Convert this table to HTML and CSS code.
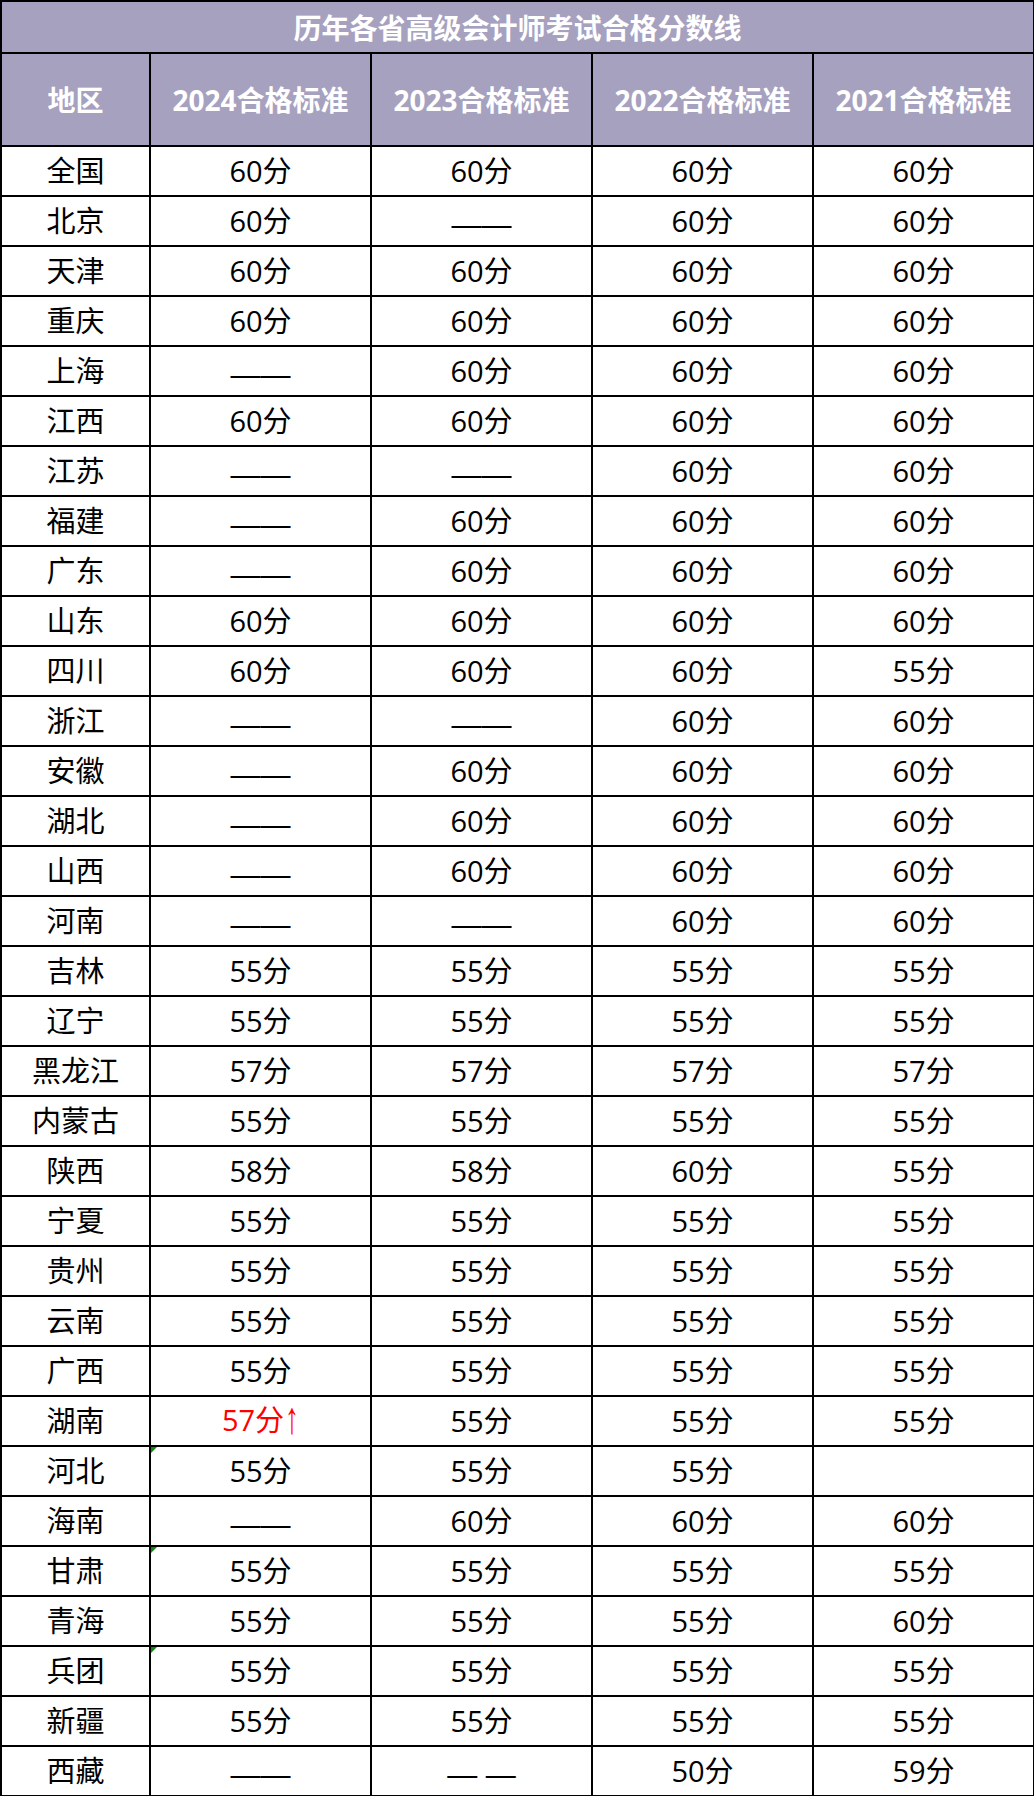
FILE: index.html
```html
<!DOCTYPE html>
<html lang="zh-CN">
<head>
<meta charset="utf-8">
<title>历年各省高级会计师考试合格分数线</title>
<link rel="stylesheet" href="styles.css">
</head>
<body>
<table class="sheet">
  <colgroup>
    <col class="c-region">
    <col class="c-year">
    <col class="c-year">
    <col class="c-year">
    <col class="c-year">
  </colgroup>
  <thead>
    <tr class="title-row"><th colspan="5">历年各省高级会计师考试合格分数线</th></tr>
    <tr class="head-row"><th>地区</th><th>2024合格标准</th><th>2023合格标准</th><th>2022合格标准</th><th>2021合格标准</th></tr>
  </thead>
  <tbody>
    <tr><td>全国</td><td>60分</td><td>60分</td><td>60分</td><td>60分</td></tr>
    <tr><td>北京</td><td>60分</td><td><span class="dash">——</span></td><td>60分</td><td>60分</td></tr>
    <tr><td>天津</td><td>60分</td><td>60分</td><td>60分</td><td>60分</td></tr>
    <tr><td>重庆</td><td>60分</td><td>60分</td><td>60分</td><td>60分</td></tr>
    <tr><td>上海</td><td><span class="dash">——</span></td><td>60分</td><td>60分</td><td>60分</td></tr>
    <tr><td>江西</td><td>60分</td><td>60分</td><td>60分</td><td>60分</td></tr>
    <tr><td>江苏</td><td><span class="dash">——</span></td><td><span class="dash">——</span></td><td>60分</td><td>60分</td></tr>
    <tr><td>福建</td><td><span class="dash">——</span></td><td>60分</td><td>60分</td><td>60分</td></tr>
    <tr><td>广东</td><td><span class="dash">——</span></td><td>60分</td><td>60分</td><td>60分</td></tr>
    <tr><td>山东</td><td>60分</td><td>60分</td><td>60分</td><td>60分</td></tr>
    <tr><td>四川</td><td>60分</td><td>60分</td><td>60分</td><td>55分</td></tr>
    <tr><td>浙江</td><td><span class="dash">——</span></td><td><span class="dash">——</span></td><td>60分</td><td>60分</td></tr>
    <tr><td>安徽</td><td><span class="dash">——</span></td><td>60分</td><td>60分</td><td>60分</td></tr>
    <tr><td>湖北</td><td><span class="dash">——</span></td><td>60分</td><td>60分</td><td>60分</td></tr>
    <tr><td>山西</td><td><span class="dash">——</span></td><td>60分</td><td>60分</td><td>60分</td></tr>
    <tr><td>河南</td><td><span class="dash">——</span></td><td><span class="dash">——</span></td><td>60分</td><td>60分</td></tr>
    <tr><td>吉林</td><td>55分</td><td>55分</td><td>55分</td><td>55分</td></tr>
    <tr><td>辽宁</td><td>55分</td><td>55分</td><td>55分</td><td>55分</td></tr>
    <tr><td>黑龙江</td><td>57分</td><td>57分</td><td>57分</td><td>57分</td></tr>
    <tr><td>内蒙古</td><td>55分</td><td>55分</td><td>55分</td><td>55分</td></tr>
    <tr><td>陕西</td><td>58分</td><td>58分</td><td>60分</td><td>55分</td></tr>
    <tr><td>宁夏</td><td>55分</td><td>55分</td><td>55分</td><td>55分</td></tr>
    <tr><td>贵州</td><td>55分</td><td>55分</td><td>55分</td><td>55分</td></tr>
    <tr><td>云南</td><td>55分</td><td>55分</td><td>55分</td><td>55分</td></tr>
    <tr><td>广西</td><td>55分</td><td>55分</td><td>55分</td><td>55分</td></tr>
    <tr><td>湖南</td><td class="up">57分<span class="arrow">↑</span></td><td>55分</td><td>55分</td><td>55分</td></tr>
    <tr><td>河北</td><td class="note">55分</td><td>55分</td><td>55分</td><td></td></tr>
    <tr><td>海南</td><td><span class="dash">——</span></td><td>60分</td><td>60分</td><td>60分</td></tr>
    <tr><td>甘肃</td><td class="note">55分</td><td>55分</td><td>55分</td><td>55分</td></tr>
    <tr><td>青海</td><td>55分</td><td>55分</td><td>55分</td><td>60分</td></tr>
    <tr><td>兵团</td><td class="note">55分</td><td>55分</td><td>55分</td><td>55分</td></tr>
    <tr><td>新疆</td><td>55分</td><td>55分</td><td>55分</td><td>55分</td></tr>
    <tr><td>西藏</td><td><span class="dash">——</span></td><td><span class="dash">— —</span></td><td>50分</td><td>59分</td></tr>
  </tbody>
</table>
</body>
</html>
```

FILE: styles.css
```css
html, body {
  margin: 0;
  padding: 0;
  background: #ffffff;
}

.sheet {
  border-collapse: collapse;
  table-layout: fixed;
  width: 1034px;
  font-family: "Open Sans", "Noto Sans CJK SC", sans-serif;
  font-size: 29px;
  color: #000000;
}

.c-region { width: 149px; }
.c-year { width: 221px; }

.sheet th,
.sheet td {
  border: 2px solid #000000;
  padding: 0;
  text-align: center;
  vertical-align: middle;
  white-space: nowrap;
}

.sheet td {
  height: 48px;
  line-height: 40px;
  font-weight: 400;
}

.title-row th {
  height: 50px;
  background: #a7a1c0;
  color: #ffffff;
  font-family: "Noto Sans CJK SC", sans-serif;
  font-weight: 700;
  font-size: 28px;
  line-height: 36px;
}

.head-row th {
  height: 91px;
  background: #a7a1c0;
  color: #ffffff;
  font-weight: 700;
  font-size: 28px;
  line-height: 40px;
}

.dash {
  display: inline-block;
  font-family: "Liberation Sans", sans-serif;
  font-size: 30px;
  transform: translateY(3px);
}

.up {
  color: #ff0000;
}

.arrow {
  display: inline-block;
  font-family: "Liberation Sans", "DejaVu Sans", sans-serif;
  font-size: 28px;
  line-height: 40px;
  margin-left: 1px;
  transform: translateY(-3px) scaleY(1.6);
}

.note {
  position: relative;
}

.note::before {
  content: "";
  position: absolute;
  left: 0;
  top: 0;
  width: 0;
  height: 0;
  border-top: 6px solid #118a11;
  border-right: 6px solid transparent;
}
```
